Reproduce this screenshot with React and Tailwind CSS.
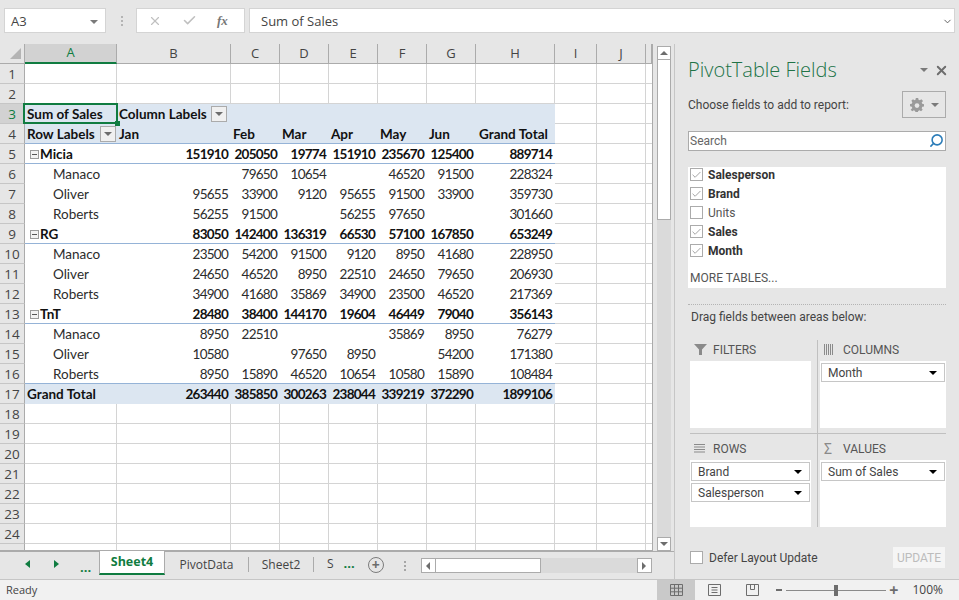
import { X, Check, Search, ChevronLeft } from 'lucide-react'

const colWidths = [92, 114, 49, 49, 49, 49, 49, 79, 42, 49, 6]
const colNames = ['A', 'B', 'C', 'D', 'E', 'F', 'G', 'H', 'I', 'J', '']

// kind, label, then values for columns B..H
const pivotRows = {
  5: ['group', 'Micia', 151910, 205050, 19774, 151910, 235670, 125400, 889714],
  6: ['item', 'Manaco', '', 79650, 10654, '', 46520, 91500, 228324],
  7: ['item', 'Oliver', 95655, 33900, 9120, 95655, 91500, 33900, 359730],
  8: ['item', 'Roberts', 56255, 91500, '', 56255, 97650, '', 301660],
  9: ['group', 'RG', 83050, 142400, 136319, 66530, 57100, 167850, 653249],
  10: ['item', 'Manaco', 23500, 54200, 91500, 9120, 8950, 41680, 228950],
  11: ['item', 'Oliver', 24650, 46520, 8950, 22510, 24650, 79650, 206930],
  12: ['item', 'Roberts', 34900, 41680, 35869, 34900, 23500, 46520, 217369],
  13: ['group', 'TnT', 28480, 38400, 144170, 19604, 46449, 79040, 356143],
  14: ['item', 'Manaco', 8950, 22510, '', '', 35869, 8950, 76279],
  15: ['item', 'Oliver', 10580, '', 97650, 8950, '', 54200, 171380],
  16: ['item', 'Roberts', 8950, 15890, 46520, 10654, 10580, 15890, 108484],
  17: ['total', 'Grand Total', 263440, 385850, 300263, 238044, 339219, 372290, 1899106],
}

function FilterBtn({ className = '' }) {
  return (
    <span className={`flex h-[16px] w-[16px] items-center justify-center border border-[#ababab] bg-[#f0f0f0] ${className}`}>
      <span className="h-0 w-0 border-x-[4px] border-t-[4px] border-x-transparent border-t-[#6d6d6d]" />
    </span>
  )
}

function Cell({ w, className = '', children }) {
  return (
    <div style={{ width: w }} className={`flex h-full shrink-0 items-center whitespace-nowrap ${className}`}>
      {children}
    </div>
  )
}

function PlainCells({ from = 0 }) {
  return colWidths.slice(from).map((w, i) => (
    <Cell key={i} w={w} className={from + i < 10 ? 'border-r border-[#d4d4d4]' : ''} />
  ))
}

function RowHead({ n, active }) {
  return (
    <div className={`flex h-full w-[25px] shrink-0 items-center justify-center border-r border-b border-r-[#ababab] border-b-[#c6c6c6] pt-px font-['Open_Sans',sans-serif] text-[13.5px] ${active ? 'bg-[#d2d2d2] text-[#107c41]' : 'bg-[#e6e6e6] text-[#444]'}`}>
      {n}
    </div>
  )
}

function RightCells() {
  return (
    <div className="flex h-full border-b border-[#d4d4d4]">
      <PlainCells from={8} />
    </div>
  )
}

function PivotRow({ n }) {
  const [kind, label, ...vals] = pivotRows[n]
  const bold = kind !== 'item'
  const bottom = kind === 'group' || n === 16 ? 'border-[#95b3d7]' : 'border-transparent'
  return (
    <div className="flex h-[20px] shrink-0">
      <RowHead n={n} />
      <div className={`flex h-full w-[530px] shrink-0 border-b pt-px ${bottom} ${kind === 'total' ? 'bg-[#dce6f1]' : ''} ${bold ? 'font-bold text-[#111]' : 'text-[#2c2c2c]'}`}>
        <Cell w={colWidths[0]} className={kind === 'item' ? 'pl-[28px]' : kind === 'group' ? 'pl-[5px]' : 'pl-[2px]'}>
          {kind === 'group' && (
            <span className="mr-[1px] flex h-[9px] w-[9px] items-center justify-center border border-[#9a9a9a] bg-[#f2f2f2]">
              <span className="h-px w-[5px] bg-[#555]" />
            </span>
          )}
          {label}
        </Cell>
        {vals.map((v, i) => (
          <Cell key={i} w={colWidths[i + 1]} className="justify-end pr-[3px] tracking-[-0.75px]">
            {v}
          </Cell>
        ))}
      </div>
      <RightCells />
    </div>
  )
}

function EmptyRow({ n }) {
  return (
    <div className="flex h-[20px] shrink-0">
      <RowHead n={n} />
      <div className="flex h-full border-b border-[#d4d4d4]">
        <PlainCells />
      </div>
    </div>
  )
}

function Sheet() {
  return (
    <div className="relative flex w-[653px] shrink-0 flex-col overflow-hidden border-r border-b border-[#ababab] bg-white font-['Lato',sans-serif] text-[13.5px]">
      {/* column letters */}
      <div className="flex h-[20px] shrink-0 bg-[#e6e6e6] font-['Open_Sans',sans-serif] text-[13px] text-[#444]">
        <div className="relative w-[25px] shrink-0 border-r border-b border-[#ababab]">
          <span className="absolute right-[3px] bottom-[4px] h-0 w-0 border-b-[11px] border-l-[11px] border-b-[#b4b4b4] border-l-transparent" />
        </div>
        {colNames.map((c, i) => (
          <div
            key={i}
            style={{ width: colWidths[i] }}
            className={`flex shrink-0 items-center justify-center ${c === 'A' ? 'border-r border-b-2 border-r-[#ababab] border-b-[#107c41] bg-[#d2d2d2] text-[#107c41]' : 'border-r border-b border-[#ababab]'}`}
          >
            {c}
          </div>
        ))}
      </div>

      <EmptyRow n={1} />
      <EmptyRow n={2} />

      <div className="flex h-[20px] shrink-0">
        <RowHead n={3} active />
        <div className="flex w-[530px] shrink-0 bg-[#dce6f1] font-bold text-[#111]">
          <Cell w={colWidths[0]} className="relative pl-[2px]">
            Sum of Sales
            <span className="absolute -top-px -left-[2px] h-[21px] w-[95px] border-2 border-[#107c41]" />
            <span className="absolute -right-[3px] -bottom-[2px] h-[5px] w-[5px] bg-[#107c41]" />
          </Cell>
          <div className="flex items-center pl-[2px]">
            Column Labels
            <FilterBtn className="ml-[4px]" />
          </div>
        </div>
        <RightCells />
      </div>

      <div className="flex h-[20px] shrink-0">
        <RowHead n={4} />
        <div className="flex w-[530px] shrink-0 border-b border-[#95b3d7] bg-[#dce6f1] pt-px font-bold text-[#111]">
          <Cell w={colWidths[0]} className="justify-between pr-[1px] pl-[2px]">
            Row Labels
            <FilterBtn />
          </Cell>
          <Cell w={colWidths[1]} className="pl-[2px]">Jan</Cell>
          {['Feb', 'Mar', 'Apr', 'May', 'Jun'].map((m) => (
            <Cell key={m} w={49} className="pl-[2px]">{m}</Cell>
          ))}
          <Cell w={79} className="pl-[3px]">Grand Total</Cell>
        </div>
        <RightCells />
      </div>

      {[5, 6, 7, 8, 9, 10, 11, 12, 13, 14, 15, 16, 17].map((n) => (
        <PivotRow key={n} n={n} />
      ))}
      {[18, 19, 20, 21, 22, 23, 24, 25].map((n) => (
        <EmptyRow key={n} n={n} />
      ))}
    </div>
  )
}

function VScroll() {
  return (
    <div className="mt-[2px] ml-[4px] flex w-[14px] shrink-0 flex-col">
      <div className="flex h-[14px] items-center justify-center border border-[#ababab] bg-white">
        <span className="h-0 w-0 border-x-[4px] border-b-[4px] border-x-transparent border-b-[#6d6d6d]" />
      </div>
      <div className="h-[160px] border-x border-b border-[#ababab] bg-white" />
      <div className="flex-1 bg-[#dadada]" />
      <div className="flex h-[14px] items-center justify-center border border-[#ababab] bg-white">
        <span className="h-0 w-0 border-x-[4px] border-t-[4px] border-x-transparent border-t-[#6d6d6d]" />
      </div>
    </div>
  )
}

function TabBar() {
  return (
    <div className="flex h-[28px] shrink-0 bg-[#e6e6e6] font-['Open_Sans',sans-serif] text-[12px] text-[#444]">
      <div className="flex w-[99px] items-start border-t border-[#ababab] pt-[8px] pl-[25px] text-[#107c41]">
        <span className="h-0 w-0 border-y-[4px] border-r-[5px] border-y-transparent border-r-[#107c41]" />
        <span className="ml-[24px] h-0 w-0 border-y-[4px] border-l-[5px] border-y-transparent border-l-[#107c41]" />
        <span className="mt-[1px] ml-[21px] text-[13px] leading-[13px] font-bold">...</span>
      </div>
      <div className="flex h-[24px] w-[66px] items-center justify-center border-x border-b-2 border-x-[#ababab] border-b-[#107c41] bg-white text-[12.5px] font-bold text-[#107c41]">
        Sheet4
      </div>
      <div className="flex flex-1 border-t border-[#ababab]">
        <div className="mt-[5px] flex h-[15px] w-[84px] items-center justify-center border-r border-[#ababab]">PivotData</div>
        <div className="mt-[5px] flex h-[15px] w-[65px] items-center justify-center border-r border-[#ababab]">Sheet2</div>
        <div className="mt-[4px] ml-[13px] flex h-[16px] items-center">S</div>
        <span className="mt-[5px] ml-[10px] text-[13px] leading-[13px] font-bold text-[#107c41]">...</span>
        <div className="mt-[5px] ml-[13px] flex h-[16px] w-[16px] items-center justify-center rounded-full border border-[#7c7c7c] text-[14px] leading-none font-bold text-[#6d6d6d]">+</div>
        <div className="mt-[9px] ml-[20px] flex flex-col gap-[2px]">
          <span className="h-[2px] w-[2px] bg-[#a6a6a6]" />
          <span className="h-[2px] w-[2px] bg-[#a6a6a6]" />
          <span className="h-[2px] w-[2px] bg-[#a6a6a6]" />
        </div>
        <div className="mt-[6px] ml-[15px] flex h-[15px] w-[231px]">
          <div className="flex w-[15px] items-center justify-center border border-[#ababab] bg-white">
            <span className="h-0 w-0 border-y-[4px] border-r-[4px] border-y-transparent border-r-[#6d6d6d]" />
          </div>
          <div className="w-[105px] border-y border-r border-[#ababab] bg-white" />
          <div className="flex-1 bg-[#dadada]" />
          <div className="flex w-[15px] items-center justify-center border border-[#ababab] bg-white">
            <span className="h-0 w-0 border-y-[4px] border-l-[4px] border-y-transparent border-l-[#6d6d6d]" />
          </div>
        </div>
      </div>
    </div>
  )
}

function FieldCheck({ label, checked }) {
  return (
    <div className="flex h-[19px] items-center pl-[2px]">
      <span className="flex h-[13px] w-[13px] items-center justify-center border border-[#ababab] bg-white">
        {checked && <Check size={12} strokeWidth={1.5} className="text-[#7a7a7a]" />}
      </span>
      <span className={`ml-[5px] ${checked ? 'font-bold text-[#333]' : 'text-[#555]'}`}>{label}</span>
    </div>
  )
}

function AreaPill({ label }) {
  return (
    <div className="flex h-[19px] shrink-0 items-center justify-between border border-[#c6c6c6] bg-white pr-[7px] pl-[6px] text-[#444]">
      {label}
      <span className="h-0 w-0 border-x-[4px] border-t-[4px] border-x-transparent border-t-black" />
    </div>
  )
}

function Area({ icon, title, pills = [], width, head, boxClass = '' }) {
  return (
    <div style={{ width }} className="flex flex-col">
      <div className={`flex items-center pl-[4px] text-[#555] ${head}`}>
        <span className="flex w-[19px] items-center">{icon}</span>
        {title}
      </div>
      <div className={`flex h-[67px] flex-col gap-[2px] bg-white p-[1px] pt-[2px] ${boxClass}`}>
        {pills.map((p) => (
          <AreaPill key={p} label={p} />
        ))}
      </div>
    </div>
  )
}

function TaskPane() {
  return (
    <div className="flex w-[285px] shrink-0 flex-col border-l border-[#c6c6c6] pt-[13px] pr-[13px] pl-[13px] font-['Roboto',sans-serif] text-[12px] text-[#444]">
      <div className="flex h-[26px] items-center justify-between">
        <span className="font-['Open_Sans',sans-serif] text-[20px] font-light text-[#217346]">PivotTable Fields</span>
        <div className="mr-[-3px] flex items-center gap-[6px]">
          <span className="h-0 w-0 border-x-[4px] border-t-[4px] border-x-transparent border-t-[#7a7a7a]" />
          <X size={15} strokeWidth={3} className="text-[#6d6d6d]" />
        </div>
      </div>
      <div className="mt-[8px] flex h-[27px] items-center justify-between">
        Choose fields to add to report:
        <div className="flex h-[27px] w-[44px] items-center justify-center gap-[7px] border border-[#ababab]">
          <svg viewBox="0 0 24 24" width="14" height="14" fill="#9a9a9a">
            <path d="M10 1h4l.6 3 2.3 1 2.6-1.7 2.8 2.8L20 8.700l1 2.300 3 .6v4l-3 .6-1 2.300 1.700 2.600-2.800 2.800-2.600-1.700-2.300 1-.6 3h-4l-.6-3-2.300-1-2.600 1.700-2.800-2.800L4 18.200 3 15.900 0 15.300v-4l3-.6 1-2.300L2.300 5.800 5.100 3l2.600 1.700L9.400 4z" transform="translate(0 -1)" fillRule="evenodd" />
            <circle cx="12" cy="13" r="4" fill="#e6e6e6" />
          </svg>
          <span className="h-0 w-0 border-x-[4px] border-t-[4px] border-x-transparent border-t-[#7a7a7a]" />
        </div>
      </div>
      <div className="mt-[13px] flex h-[20px] items-center justify-between border border-[#ababab] bg-white pr-[1px] pb-px pl-[1px] text-[#666]">
        Search
        <Search size={15} strokeWidth={2.5} className="-scale-x-100 text-[#2b7cb8]" />
      </div>
      <div className="mt-[16px] h-[121px] bg-white">
        <div className="-mt-[2px]">
          <FieldCheck label="Salesperson" checked />
          <FieldCheck label="Brand" checked />
          <FieldCheck label="Units" />
          <FieldCheck label="Sales" checked />
          <FieldCheck label="Month" checked />
        </div>
        <div className="mt-[9px] pl-[2px] text-[#555]">MORE TABLES...</div>
      </div>
      <div className="mt-[16px] border-t border-dotted border-[#b4b4b4]" />
      <div className="mt-[2px] pl-[3px] leading-[20px]">Drag fields between areas below:</div>

      <div className="mt-[13px] ml-[2px] flex pb-[5px]">
        <Area
          width={121}
          head="h-[21px] pb-[2px]"
          title="FILTERS"
          icon={
            <svg width="13" height="13" viewBox="0 0 13 13" fill="#8a8a8a">
              <path d="M0 1h13L8 6.500V12H5V6.500z" />
            </svg>
          }
        />
        <div className="-mb-[5px] ml-[6px] w-px bg-[#c0c0c0]" />
        <Area
          width={128}
          head="ml-[2px] h-[21px] pb-[2px] pl-[3px]"
          boxClass="ml-[2px]"
          title="COLUMNS"
          pills={['Month']}
          icon={
            <svg width="9" height="11" viewBox="0 0 9 11" fill="#8a8a8a">
              <path d="M0 0h1v11H0zM2 0h1v11H2zM4 0h1v11H4zM6 0h1v11H6zM8 0h1v11H8z" />
            </svg>
          }
        />
      </div>
      <div className="ml-[2px] border-t border-[#c0c0c0]" />
      <div className="ml-[2px] flex">
        <Area
          width={121}
          head="h-[26px] pt-[3px]"
          title="ROWS"
          pills={['Brand', 'Salesperson']}
          icon={
            <svg width="11" height="9" viewBox="0 0 11 9" fill="#8a8a8a">
              <path d="M0 0h11v1H0zM0 2.500h11v1H0zM0 5h11v1H0zM0 7.500h11v1H0z" />
            </svg>
          }
        />
        <div className="ml-[6px] w-px bg-[#c0c0c0]" />
        <Area
          width={128}
          head="ml-[2px] h-[26px] pt-[3px] pl-[3px]"
          boxClass="ml-[2px]"
          title="VALUES"
          pills={['Sum of Sales']}
          icon={<span className="text-[14px] leading-none text-[#8a8a8a]">Σ</span>}
        />
      </div>
      <div className="mt-[20px] flex items-center justify-between">
        <div className="ml-[2px] flex items-center">
          <span className="h-[13px] w-[13px] border border-[#ababab] bg-white" />
          <span className="ml-[6px]">Defer Layout Update</span>
        </div>
        <div className="mr-[1px] flex h-[21px] w-[52px] items-center justify-center bg-[#f5f5f5] text-[#bcbcbc]">UPDATE</div>
      </div>
    </div>
  )
}

function StatusBar() {
  return (
    <div className="flex h-[21px] shrink-0 items-center border-t border-[#c6c6c6] bg-[#f1f1f1] font-['Open_Sans',sans-serif] text-[11px] text-[#444]">
      <span className="ml-[6px] flex-1">Ready</span>
      <div className="flex h-full w-[38px] items-center justify-center bg-[#c9c9c9]">
        <svg width="13" height="12" viewBox="0 0 13 12" fill="none" stroke="#6d6d6d">
          <path d="M.5.500h12v11H.5zM4.500.500v11M8.500.500v11M.5 4.200h12M.5 7.800h12" />
        </svg>
      </div>
      <div className="flex w-[38px] justify-center">
        <svg width="13" height="12" viewBox="0 0 13 12" fill="none" stroke="#6d6d6d">
          <path d="M.5.500h12v11H.5zM3.500 3.500h6M3.500 6h6M3.500 8.500h6" />
        </svg>
      </div>
      <div className="flex w-[38px] justify-center">
        <svg width="13" height="12" viewBox="0 0 13 12" fill="none" stroke="#6d6d6d">
          <path d="M.5.500h12v11H.5zM4.500.500v5h4v-5" />
        </svg>
      </div>
      <div className="ml-[5px] flex items-center">
        <span className="h-[2px] w-[6px] bg-[#6d6d6d]" />
        <div className="relative ml-[4px] h-px w-[100px] bg-[#8a8a8a]">
          <span className="absolute top-[-5px] left-[48px] h-[11px] w-[4px] bg-[#6d6d6d]" />
        </div>
        <span className="ml-[3px] text-[16px] leading-none font-bold text-[#6d6d6d]">+</span>
      </div>
      <span className="mr-[16px] ml-[14px] text-[12px]">100%</span>
    </div>
  )
}

export default function App() {
  return (
    <div className="flex h-[600px] w-[959px] flex-col overflow-hidden bg-[#e6e6e6]">
      {/* formula bar */}
      <div className="flex h-[44px] shrink-0 pt-[8px] pl-[4px] font-['Open_Sans',sans-serif] text-[13px] text-[#444]">
        <div className="flex h-[25px] w-[102px] items-center justify-between border border-[#d4d4d4] bg-white pt-[2px] pr-[7px] pl-[6px]">
          A3
          <span className="h-0 w-0 border-x-[4px] border-t-[4px] border-x-transparent border-t-[#7a7a7a]" />
        </div>
        <div className="ml-[15px] flex h-[25px] flex-col justify-center gap-[2px]">
          <span className="h-[2px] w-[2px] bg-[#b4b4b4]" />
          <span className="h-[2px] w-[2px] bg-[#b4b4b4]" />
          <span className="h-[2px] w-[2px] bg-[#b4b4b4]" />
        </div>
        <div className="ml-[13px] flex h-[25px] w-[109px] items-center border border-[#d4d4d4] bg-white">
          <X size={14} strokeWidth={2} className="ml-[11px] text-[#c0c0c0]" />
          <Check size={15} strokeWidth={2.5} className="ml-[20px] text-[#c0c0c0]" />
          <span className="ml-[20px] font-['Liberation_Serif',serif] text-[13px] font-bold text-[#777] italic">fx</span>
        </div>
        <div className="ml-[4px] flex h-[25px] w-[706px] items-center justify-between border border-[#d4d4d4] bg-white pt-[2px] pr-[1px] pl-[11px]">
          Sum of Sales
          <ChevronLeft size={11} strokeWidth={2} className="-rotate-90 text-[#555]" />
        </div>
      </div>

      <div className="flex min-h-0 flex-1">
        <div className="flex w-[674px] shrink-0 flex-col">
          <div className="flex h-[507px] shrink-0">
            <Sheet />
            <VScroll />
          </div>
          <TabBar />
        </div>
        <TaskPane />
      </div>
      <StatusBar />
    </div>
  )
}
